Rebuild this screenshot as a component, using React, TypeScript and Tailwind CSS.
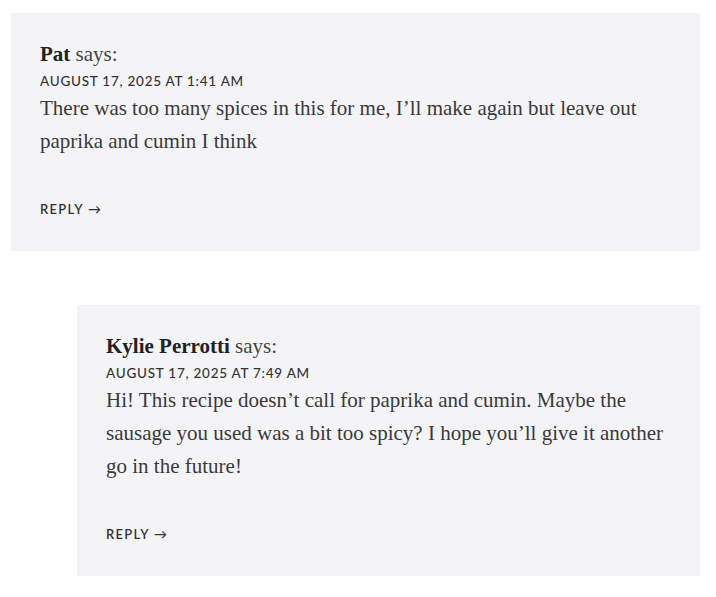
import React from "react";

const serif = { fontFamily: '"Liberation Serif", "DejaVu Serif", serif' };

function Comment({
  name,
  date,
  lines,
  className,
}: {
  name: string;
  date: string;
  lines: string;
  className: string;
}) {
  return (
    <div className={`bg-[#f4f4f6] text-[#2b2b2b] pl-[29px] pr-[30px] pt-[28px] pb-[33px] ${className}`}>
      <div className="text-[21px] leading-[26px] font-['Liberation_Serif',serif]">
        <span className="font-bold text-[#222]">{name}</span> <span className="text-[#444]">says:</span>
      </div>
      <div className="mt-[5px] text-[13.5px] leading-[18px] tracking-[0.75px] uppercase font-['Lato',sans-serif] font-medium text-[#333]">
        {date}
      </div>
      <p className="mt-[2px] text-[21px] leading-[33px] font-['Liberation_Serif',serif] text-[#3a3a3a]">{lines}</p>
      <div className="mt-[42px] text-[13px] leading-[18px] tracking-[1.3px] uppercase font-['Lato',sans-serif] font-semibold text-[#333]">
        Reply →
      </div>
    </div>
  );
}

export default function App() {
  return (
    <div className="bg-white w-[716px] h-[597px] pt-[13px] pl-[11px] pr-[16px]" style={serif}>
      <Comment
        name="Pat"
        date="August 17, 2025 at 1:41 am"
        lines="There was too many spices in this for me, I’ll make again but leave out paprika and cumin I think"
        className=""
      />
      <Comment
        name="Kylie Perrotti"
        date="August 17, 2025 at 7:49 am"
        lines="Hi! This recipe doesn’t call for paprika and cumin. Maybe the sausage you used was a bit too spicy? I hope you’ll give it another go in the future!"
        className="mt-[54px] ml-[66px]"
      />
    </div>
  );
}
